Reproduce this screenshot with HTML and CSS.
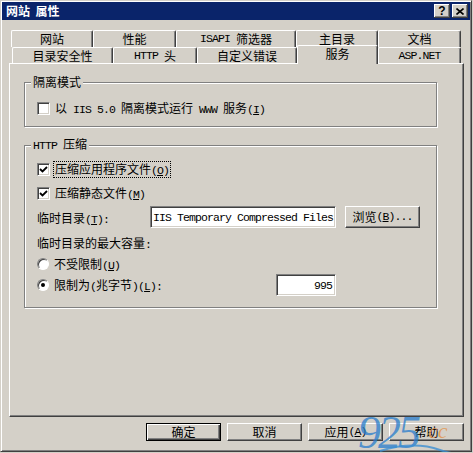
FILE: index.html
```html
<!DOCTYPE html>
<html lang="zh-CN">
<head>
    <meta charset="UTF-8">
    <title>网站 属性</title>
    <link rel="stylesheet" href="styles.css">
</head>
<body>

    <div class="window">
        <div class="titlebar">
            <span class="title">网站&nbsp;&nbsp;属性</span>
            <div class="title-buttons">
                <span class="tbtn help-btn">?</span>
                <span class="tbtn">
                    <svg width="8" height="7" viewBox="0 0 8 7"><path d="M0.5 0.5 L7.5 6.5 M7.5 0.5 L0.5 6.5" stroke="#000" stroke-width="1.6" fill="none"/></svg>
                </span>
            </div>
        </div>

        <div class="tabs">
            <div class="tab-row back">
                <div class="tab">网站</div>
                <div class="tab">性能</div>
                <div class="tab"><span class="en">ISAPI&nbsp;</span>筛选器</div>
                <div class="tab">主目录</div>
                <div class="tab">文档</div>
            </div>
            <div class="tab-row front">
                <div class="tab">目录安全性</div>
                <div class="tab"><span class="en">HTTP&nbsp;</span>头</div>
                <div class="tab">自定义错误</div>
                <div class="tab active">服务</div>
                <div class="tab"><span class="en">ASP.NET</span></div>
            </div>
        </div>

        <div class="panel">
            <fieldset class="group group-iso">
                <legend>隔离模式</legend>
                <div class="group-body">
                    <div class="row row-iso">
                        <span class="checkbox"></span>
                        <span class="caption">以<span class="en">&nbsp;IIS 5.0&nbsp;</span>隔离模式运行<span class="en">&nbsp;WWW&nbsp;</span>服务<span class="en">(<u>I</u>)</span></span>
                    </div>
                </div>
            </fieldset>

            <fieldset class="group group-http">
                <legend><span class="en">HTTP&nbsp;</span>压缩</legend>
                <div class="group-body">
                    <div class="row row-cb1">
                        <span class="checkbox checked">
                            <svg width="9" height="9" viewBox="0 0 9 9"><polyline points="1,4 3.5,6.5 8,2" stroke="#000" stroke-width="1.8" fill="none"/></svg>
                        </span>
                        <span class="caption focus">压缩应用程序文件<span class="en">(<u>O</u>)</span></span>
                    </div>
                    <div class="row row-cb2">
                        <span class="checkbox checked">
                            <svg width="9" height="9" viewBox="0 0 9 9"><polyline points="1,4 3.5,6.5 8,2" stroke="#000" stroke-width="1.8" fill="none"/></svg>
                        </span>
                        <span class="caption">压缩静态文件<span class="en">(<u>M</u>)</span></span>
                    </div>
                    <div class="row row-dir">
                        <span class="field-label">临时目录<span class="en">(<u>T</u>):</span></span>
                        <div class="edit edit-dir"><span class="en">IIS Temporary Compressed Files</span></div>
                        <div class="button browse">浏览<span class="en">(<u>B</u>)...</span></div>
                    </div>
                    <div class="row row-max">
                        <span class="plain">临时目录的最大容量<span class="en">:</span></span>
                    </div>
                    <div class="row row-r1">
                        <span class="radio"></span>
                        <span class="caption">不受限制<span class="en">(<u>U</u>)</span></span>
                    </div>
                    <div class="row row-r2">
                        <span class="radio selected"></span>
                        <span class="caption limit">限制为<span class="en">(</span>兆字节<span class="en">)(<u>L</u>):</span></span>
                        <div class="edit edit-size"><span class="en">995</span></div>
                    </div>
                </div>
            </fieldset>
        </div>

        <div class="buttons">
            <div class="button default">确定</div>
            <div class="button">取消</div>
            <div class="button">应用<span class="en">(<u>A</u>)</span></div>
            <div class="button">帮助</div>
        </div>
    </div>

    <div class="watermark">
        <span class="wm-num">925</span>
        <span class="wm-cc">cc</span>
        <svg class="wm-wave" width="110" height="14" viewBox="0 0 110 14"><path d="M2 9 C 25 2, 45 2, 62 8 S 95 13, 108 6" stroke="#3c8fd2" stroke-width="2" fill="none" opacity="0.8"/></svg>
    </div>

</body>
</html>
```

FILE: styles.css
```css
body {
    margin: 0;
    background-color: #d4d0c8;
    font-family: "Noto Sans CJK SC", sans-serif;
    font-size: 12px;
    color: #000;
    position: relative;
}
.en {
    font-family: "Liberation Mono", monospace;
    font-size: 11.5px;
    letter-spacing: -0.9px;
}
u {
    text-decoration-thickness: 1px;
    text-underline-offset: 1px;
}

/* --- window frame --- */
.window {
    width: 472px;
    height: 452px;
    box-sizing: border-box;
    border: 1px solid;
    border-color: #d4d0c8 #404040 #404040 #d4d0c8;
    box-shadow: inset 1px 1px #fff, inset -1px -1px #808080;
    padding: 1px;
}
.titlebar {
    height: 18px;
    background-color: #0a246a;
    display: flex;
    align-items: center;
    justify-content: space-between;
    padding: 0 2px 0 4px;
}
.title {
    color: #fff;
    font-weight: bold;
    font-size: 12px;
    line-height: 18px;
}
.title-buttons {
    display: flex;
    gap: 2px;
}
.tbtn {
    width: 16px;
    height: 14px;
    box-sizing: border-box;
    background-color: #d4d0c8;
    box-shadow: inset -1px -1px #404040, inset 1px 1px #fff, inset -2px -2px #808080;
    display: flex;
    align-items: center;
    justify-content: center;
}
.help-btn {
    font-family: "Liberation Sans", sans-serif;
    font-weight: bold;
    font-size: 12px;
    line-height: 14px;
    padding-bottom: 1px;
}

/* --- tabs --- */
.tabs {
    padding-top: 10px;
}
.tab-row {
    display: flex;
    align-items: flex-start;
}
.tab-row.back {
    margin-left: 9px;
    height: 17px;
}
.tab-row.front {
    margin-left: 10px;
    height: 16px;
}
.tab {
    box-sizing: border-box;
    height: 100%;
    border-left: 1px solid #fff;
    border-top: 1px solid #fff;
    border-right: 1px solid #404040;
    box-shadow: inset -1px 0 #808080;
    border-radius: 2px 2px 0 0;
    background-color: #d4d0c8;
    display: flex;
    align-items: center;
    justify-content: center;
    line-height: 14px;
}
.tab-row.back .tab { height: 17px; }
.tab-row.front .tab { height: 16px; padding-top: 1px; }
.back .tab:nth-child(1) { width: 82px; }
.back .tab:nth-child(2) { width: 83px; }
.back .tab:nth-child(3) { width: 120px; }
.back .tab:nth-child(4) { width: 82px; }
.back .tab:nth-child(5) { width: 83px; }
.front .tab:nth-child(1) { width: 101px; }
.front .tab:nth-child(2) { width: 84px; }
.front .tab:nth-child(3) { width: 100px; }
.front .tab:nth-child(4) { width: 81px; }
.front .tab:nth-child(5) { width: 83px; }
.tab-row.front .tab.active {
    height: 19px;
    margin-top: -2px;
    padding-top: 0;
    padding-bottom: 2px;
    position: relative;
    z-index: 2;
}

/* --- page panel --- */
.panel {
    margin-left: 7px;
    width: 455px;
    height: 354px;
    box-sizing: border-box;
    border: 1px solid;
    border-color: #fff #404040 #404040 #fff;
    box-shadow: inset -1px -1px #808080;
    padding-top: 11px;
}
.group {
    margin: 0 0 0 14px;
    padding: 0;
    width: 413px;
    box-sizing: border-box;
    min-width: 0;
    border: 1px solid #808080;
    box-shadow: inset 1px 1px #fff, 1px 1px #fff;
}
.group legend {
    margin-left: 6px;
    padding: 0 2px;
    line-height: 14px;
    background-color: #d4d0c8;
}
.group-http {
    margin-top: 10px;
}
.group-body {
    display: flex;
    flex-direction: column;
    padding: 0 0 10px 12px;
}
.group-http .group-body {
    padding-bottom: 11px;
}
.row {
    display: flex;
    align-items: center;
    height: 16px;
}
.row-iso { margin-top: 11px; }
.row-cb1 { margin-top: 8px; }
.row-cb2 { margin-top: 8px; }
.row-dir { margin-top: 5px; height: 22px; }
.row-max { margin-top: 6px; }
.row-r1 { margin-top: 6px; }
.row-r2 { margin-top: 2px; height: 22px; }

.checkbox {
    width: 13px;
    height: 13px;
    box-sizing: border-box;
    flex: none;
    background-color: #fff;
    border: 1px solid;
    border-color: #808080 #fff #fff #808080;
    box-shadow: inset 1px 1px #404040, inset -1px -1px #d4d0c8;
    display: flex;
    align-items: center;
    justify-content: center;
}
.radio {
    width: 12px;
    height: 12px;
    box-sizing: border-box;
    flex: none;
    border-radius: 50%;
    background-color: #fff;
    border: 1px solid;
    border-color: #808080 #fff #fff #808080;
    box-shadow: inset 1px 1px #404040;
    display: flex;
    align-items: center;
    justify-content: center;
}
.radio.selected::after {
    content: "";
    width: 4px;
    height: 4px;
    border-radius: 50%;
    background-color: #000;
}
.caption {
    margin-left: 3px;
    padding: 0 1px;
    border: 1px solid transparent;
    line-height: 13px;
}
.caption.focus {
    border: 1px dotted #000;
}
.caption.limit {
    box-sizing: border-box;
    width: 224px;
}
.field-label {
    width: 113px;
}

.edit {
    box-sizing: border-box;
    height: 22px;
    background-color: #fff;
    border: 1px solid;
    border-color: #808080 #fff #fff #808080;
    box-shadow: inset 1px 1px #404040, inset -1px -1px #d4d0c8;
    display: flex;
    align-items: center;
    overflow: hidden;
    white-space: nowrap;
}
.edit-dir {
    width: 186px;
    padding-left: 2px;
}
.edit-size {
    width: 60px;
    justify-content: flex-end;
    padding-right: 3px;
}

/* --- push buttons --- */
.button {
    box-sizing: border-box;
    width: 75px;
    background-color: #d4d0c8;
    border: 1px solid;
    border-color: #fff #404040 #404040 #fff;
    box-shadow: inset -1px -1px #808080;
    display: flex;
    align-items: center;
    justify-content: center;
    line-height: 14px;
}
.browse {
    height: 22px;
    margin-left: 9px;
}
.buttons {
    display: flex;
    justify-content: flex-end;
    gap: 6px;
    margin: 6px 6px 0 0;
}
.buttons .button {
    height: 18px;
}
.button.default {
    border: 1px solid #000;
    box-shadow: inset 1px 1px #fff, inset -1px -1px #404040, inset -2px -2px #808080;
}

/* --- watermark over the corner --- */
.watermark {
    position: absolute;
    left: 358px;
    top: 414px;
    width: 112px;
    height: 38px;
    pointer-events: none;
}
.wm-num {
    position: absolute;
    left: 0;
    top: 0;
    font-family: "Liberation Serif", serif;
    font-style: italic;
    font-size: 46px;
    line-height: 38px;
    color: rgba(40, 125, 205, 0.75);
    letter-spacing: -3px;
}
.wm-cc {
    position: absolute;
    left: 70px;
    top: 6px;
    font-family: "Liberation Serif", serif;
    font-style: italic;
    font-size: 22px;
    line-height: 22px;
    color: rgba(225, 150, 80, 0.85);
}
.wm-wave {
    position: absolute;
    left: 20px;
    top: 28px;
}
```
